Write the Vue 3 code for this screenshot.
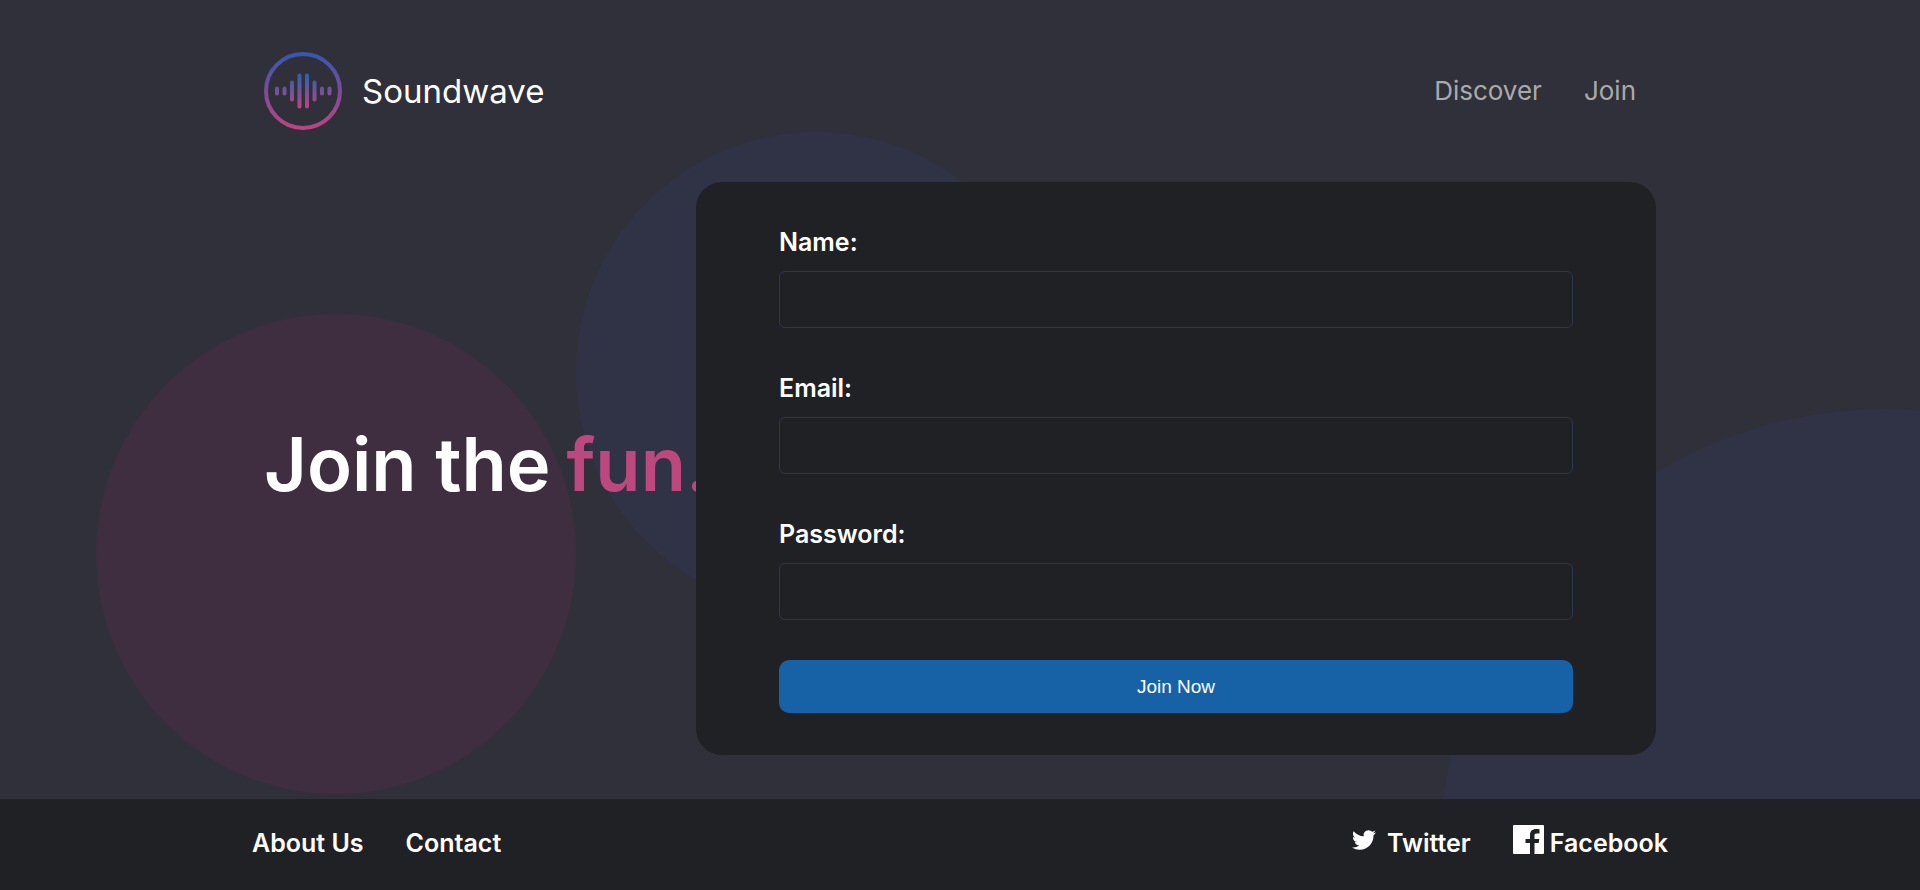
<script setup>
import { reactive } from 'vue'

const fields = [
  { id: 'name', label: 'Name:', type: 'text' },
  { id: 'email', label: 'Email:', type: 'email' },
  { id: 'password', label: 'Password:', type: 'password' }
]
const values = reactive({ name: '', email: '', password: '' })

const bars = [
  { x: 13, h: 9 },
  { x: 20.5, h: 9 },
  { x: 28, h: 21 },
  { x: 35.5, h: 35 },
  { x: 43, h: 35 },
  { x: 50.5, h: 21 },
  { x: 58, h: 9 },
  { x: 65.5, h: 9 }
]
</script>

<template>
  <div class="page">
    <div class="shapes" aria-hidden="true">
      <span class="circle circle-blue"></span>
      <span class="circle circle-pink"></span>
      <span class="circle circle-corner"></span>
    </div>

    <header class="header">
      <a class="brand" href="#">
        <svg class="logo" viewBox="0 0 78 78" aria-hidden="true">
          <defs>
            <linearGradient id="ring" x1="0" y1="0" x2="0" y2="78" gradientUnits="userSpaceOnUse">
              <stop offset="0" stop-color="#3457b2" />
              <stop offset="1" stop-color="#c0437f" />
            </linearGradient>
            <linearGradient id="wave" x1="0" y1="21" x2="0" y2="57" gradientUnits="userSpaceOnUse">
              <stop offset="0" stop-color="#2463ae" />
              <stop offset="1" stop-color="#c0437f" />
            </linearGradient>
          </defs>
          <circle cx="39" cy="39" r="37" fill="none" stroke="url(#ring)" stroke-width="4" />
          <rect
            v-for="bar in bars"
            :key="bar.x"
            :x="bar.x - 2"
            :y="39 - bar.h / 2"
            width="4"
            :height="bar.h"
            rx="2"
            fill="url(#wave)"
          />
        </svg>
        <span>Soundwave</span>
      </a>
      <nav class="nav">
        <a href="#discover">Discover</a>
        <a href="#join">Join</a>
      </nav>
    </header>

    <main class="main">
      <h1 class="title">Join the <span>fun.</span></h1>
      <form class="card" @submit.prevent>
        <div v-for="field in fields" :key="field.id" class="field">
          <label :for="field.id">{{ field.label }}</label>
          <input :id="field.id" v-model="values[field.id]" :type="field.type" />
        </div>
        <button type="submit">Join Now</button>
      </form>
    </main>

    <footer class="footer">
      <div class="footer-inner">
        <nav class="links">
          <a href="#about">About Us</a>
          <a href="#contact">Contact</a>
        </nav>
        <nav class="links">
          <a class="social twitter" href="#twitter">
            <svg width="24" height="24" viewBox="0 0 24 24" fill="#fff" aria-hidden="true">
              <path d="M23.95 4.57a10 10 0 0 1-2.82.77 4.96 4.96 0 0 0 2.16-2.72c-.95.55-2 .96-3.13 1.18a4.92 4.92 0 0 0-8.38 4.48C7.69 8.09 4.07 6.13 1.64 3.16a4.82 4.82 0 0 0-.67 2.48c0 1.71.87 3.21 2.19 4.1a4.9 4.9 0 0 1-2.23-.62v.06a4.92 4.92 0 0 0 3.95 4.83 5 5 0 0 1-2.21.08 4.94 4.94 0 0 0 4.6 3.42A9.87 9.87 0 0 1 0 19.54a13.99 13.99 0 0 0 7.55 2.21c9.05 0 14-7.5 14-13.98 0-.21 0-.42-.02-.63a9.94 9.94 0 0 0 2.46-2.55z" />
            </svg>
            <span>Twitter</span>
          </a>
          <a class="social facebook" href="#facebook">
            <svg width="31" height="29" viewBox="0 0 31 29" fill="#fff" aria-hidden="true">
              <path d="M1 0H30a1 1 0 0 1 1 1V28a1 1 0 0 1-1 1H21.500V18H25.700L26.300 14H21.500V10.800C21.500 9.200 22 8.400 23.600 8.400H26.500V4.300C25.500 4.100 24.300 4 23.200 4 19 4 17 6.300 17 10V14H12.500V18H17V29H1a1 1 0 0 1-1-1V1a1 1 0 0 1 1-1z" />
            </svg>
            <span>Facebook</span>
          </a>
        </nav>
      </div>
    </footer>
  </div>
</template>

<style>
body {
  margin: 0;
  background: #30303a;
}
</style>

<style scoped>
.page {
  position: relative;
  display: flex;
  flex-direction: column;
  min-height: 100vh;
  overflow: hidden;
  background: #30303a;
  color: #fff;
  font-family: Inter, "Liberation Sans", sans-serif;
}

a {
  color: inherit;
  text-decoration: none;
}

.circle {
  position: absolute;
  width: 25vw;
  height: 25vw;
  border-radius: 50%;
}

.circle-blue {
  top: 132px;
  left: 30vw;
  background: #303246;
}

.circle-pink {
  top: 314px;
  left: 5vw;
  background: #3e2e40;
}

.circle-corner {
  top: 46vh;
  left: 75vw;
  width: 100vh;
  height: 100vh;
  background: #303246;
}

.header,
.main,
.footer {
  position: relative;
}

.header {
  box-sizing: border-box;
  display: flex;
  align-items: center;
  justify-content: space-between;
  width: 100%;
  max-width: 1392px;
  margin: 0 auto;
  padding: 52px 20px 52px 0;
}

.brand {
  display: flex;
  align-items: center;
  gap: 20px;
  font-size: 33px;
  line-height: 40px;
}

.logo {
  width: 78px;
  height: 78px;
}

.nav {
  display: flex;
  gap: 42px;
  color: #aaa;
  font-size: 26px;
  line-height: 32px;
}

.main {
  flex: 1;
  display: flex;
  align-items: flex-start;
  width: 100%;
  max-width: 1392px;
  margin: 0 auto;
}

.title {
  flex: 1;
  align-self: stretch;
  display: flex;
  align-items: center;
  gap: 16px;
  min-width: 0;
  margin: 0;
  padding-bottom: 54px;
  font-size: 74px;
  line-height: 96px;
  font-weight: 600;
  white-space: nowrap;
}

.title span {
  color: #bd4880;
}

.card {
  position: relative;
  box-sizing: border-box;
  width: 50vw;
  padding: 44px 83px 42px;
  border-radius: 26px;
  background: #202125;
}

.field {
  display: flex;
  flex-direction: column;
  gap: 13px;
  margin-bottom: 44px;
}

.field:last-of-type {
  margin-bottom: 40px;
}

label {
  align-self: flex-start;
  font-size: 25px;
  line-height: 32px;
  font-weight: 600;
}

input {
  box-sizing: border-box;
  width: 100%;
  height: 57px;
  padding: 0 16px;
  border: 1px solid #2c3650;
  border-radius: 6px;
  outline: none;
  background: transparent;
  color: #fff;
  font: inherit;
  font-size: 18px;
}

button {
  display: block;
  width: 100%;
  height: 53px;
  border: 0;
  border-radius: 10px;
  background: #1762a7;
  color: #fff;
  font-family: "Liberation Sans", Arial, sans-serif;
  font-size: 19px;
}

.footer {
  background: #202125;
}

.footer-inner {
  box-sizing: border-box;
  display: flex;
  align-items: center;
  justify-content: space-between;
  max-width: 1416px;
  height: 91px;
  margin: 0 auto;
  padding-bottom: 4px;
}

.links {
  display: flex;
  align-items: center;
  gap: 42px;
  font-size: 25px;
  line-height: 32px;
  font-weight: 600;
}

.social {
  display: flex;
  align-items: center;
}

.social svg {
  margin-bottom: 6px;
}

.twitter {
  gap: 11px;
}

.facebook {
  gap: 6px;
}
</style>
